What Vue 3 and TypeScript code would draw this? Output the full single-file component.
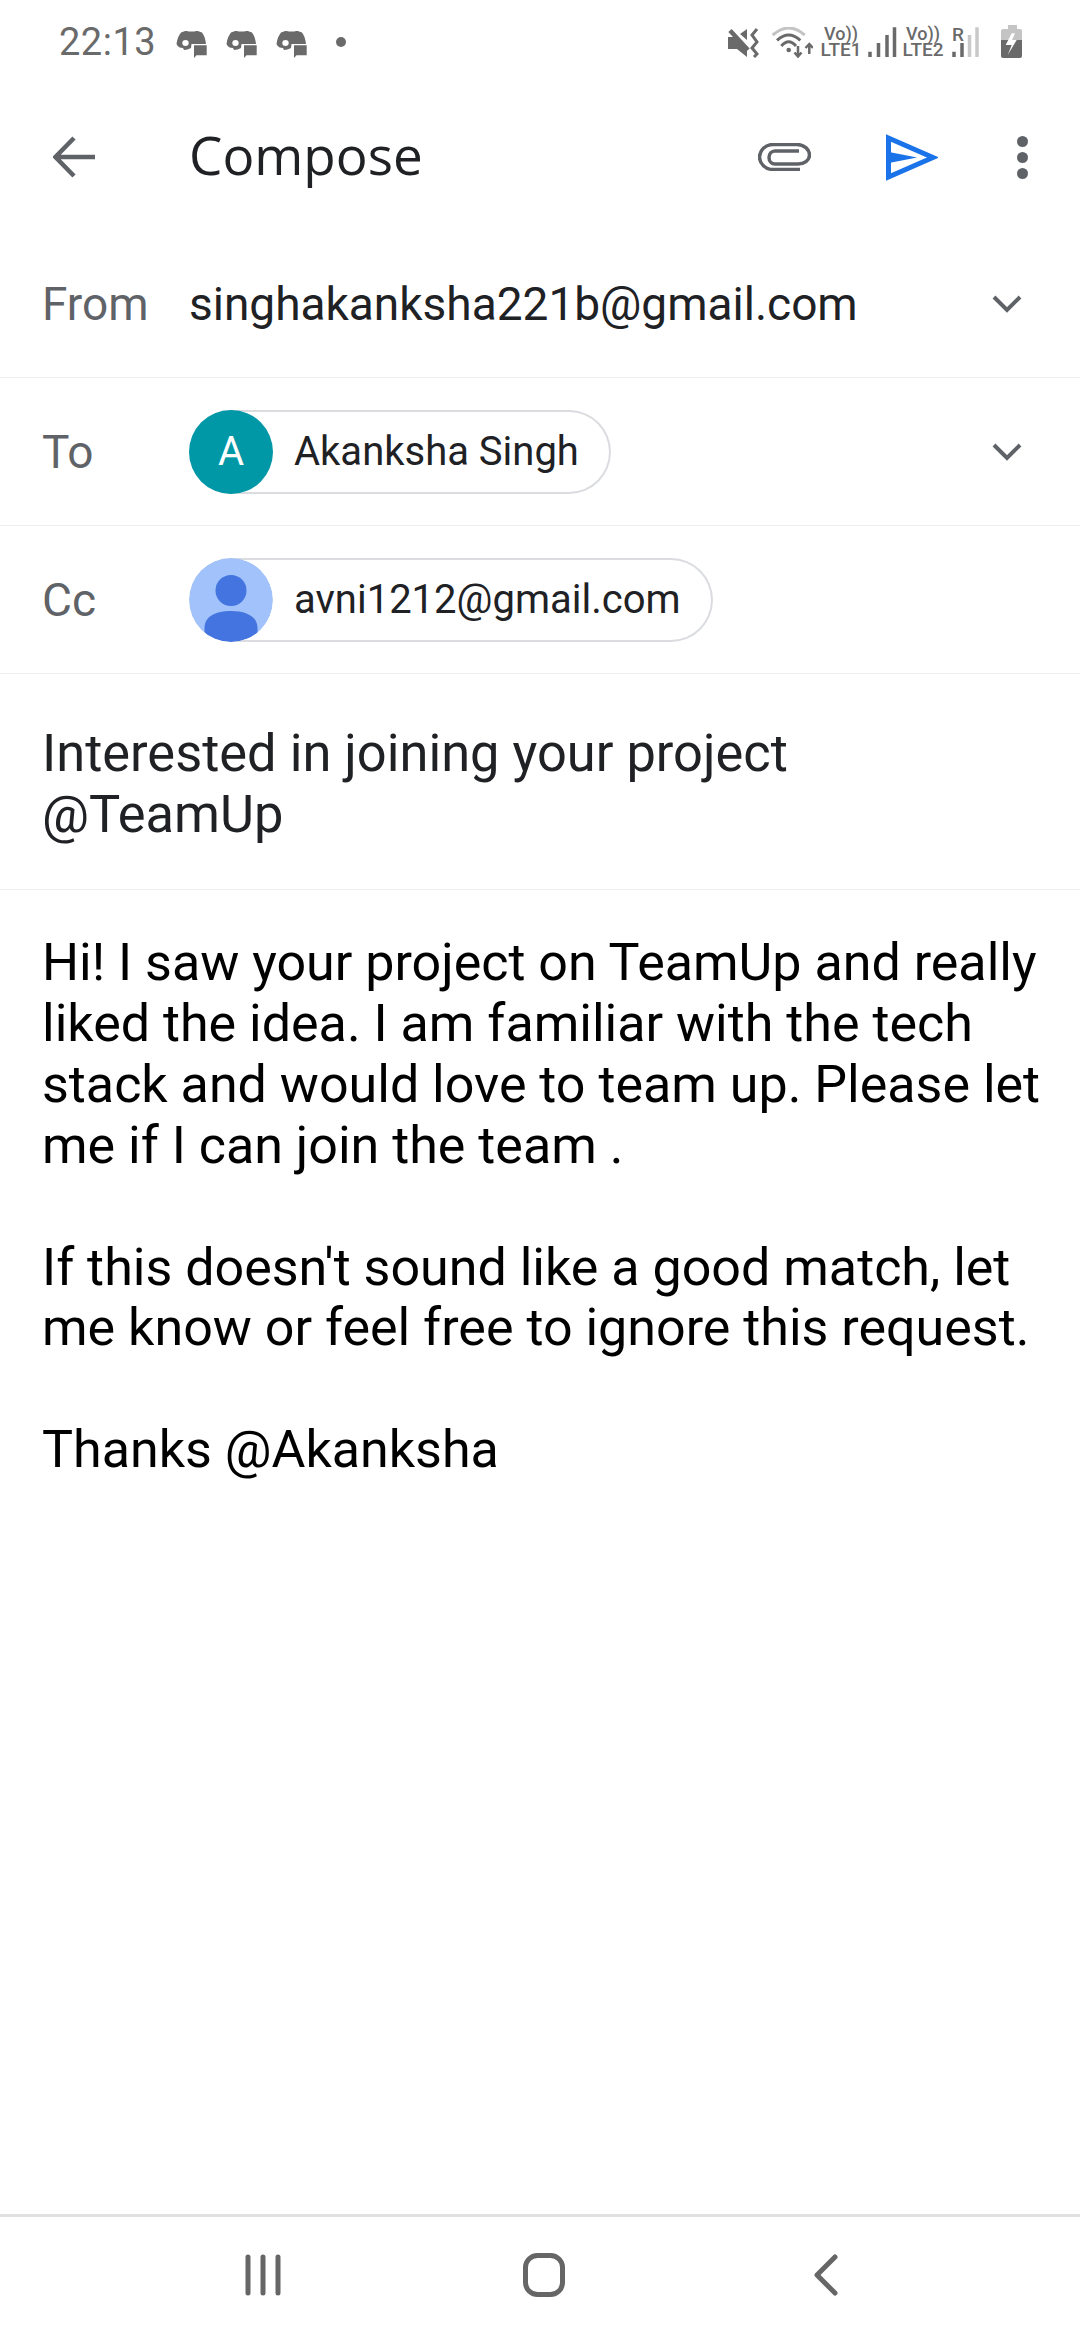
<template>
  <div class="screen">
    <div class="status-bar">
      <span class="clock">22:13</span>
      <svg v-for="n in 3" :key="n" class="discord" viewBox="0 0 31 28">
        <path d="M.5 14C1 9 3 5 5 2.500 8 1 11 .5 13 1.500h5C20 .5 23 1 26 2.500 28 5 29.500 9 30 14H15.500L15 18c-2 1-5 2-7 2l-1-2c-3 0-5-1-6.500-4z" fill="#6a6a6a" />
        <ellipse cx="9.500" cy="13" rx="3.200" ry="3" fill="#fff" />
        <path d="M18 15.300h12.700v10H20.500L18 28z" fill="#6a6a6a" stroke="#fff" stroke-width="1" paint-order="stroke" />
      </svg>
      <span class="dot" />
      <span class="spacer" />
      <svg class="mute" viewBox="0 0 31 31">
        <path d="M0 10h6l13 13v7L9 22H0zM12 7l7-5v11z" fill="#6a6a6a" />
        <path d="M2 3.500L20 23" stroke="#6a6a6a" stroke-width="4.500" />
        <path d="M29 2l-5 6 5 7-5 6 5 6-3 3" fill="none" stroke="#6a6a6a" stroke-width="3" />
      </svg>
      <svg class="wifi" viewBox="0 0 41 31">
        <path d="M.7 8Q16.700-6 32.700 8" fill="none" stroke="#c4c4c4" stroke-width="3" />
        <path d="M5 13.300Q16.700 2.700 28.300 13.300M9.300 19q7.400-8.600 14.700 0" fill="none" stroke="#6a6a6a" stroke-width="3" />
        <circle cx="16.700" cy="23" r="2.300" fill="#6a6a6a" />
        <path d="M26 19v10M22.500 25.500l3.500 4 3.500-4M37.300 27V18M33.500 21l3.800-4 3.700 4" fill="none" stroke="#6a6a6a" stroke-width="2.500" />
      </svg>
      <div class="net net-1"><span class="vo">Vo))</span><span class="lte">LTE1</span></div>
      <svg class="bars" viewBox="0 0 29 30">
        <path d="M2 30v-5.300M10.500 30V16M19 30V8M26.500 30V.3" stroke="#6a6a6a" stroke-width="3.500" />
      </svg>
      <div class="net net-2"><span class="vo">Vo))</span><span class="lte">LTE2</span></div>
      <div class="roam">
        <span class="roam-r">R</span>
        <svg class="bars-r" viewBox="0 0 27 30">
          <path d="M2 30v-5.300M10 30V16" stroke="#6a6a6a" stroke-width="3.500" />
          <path d="M17.500 30V8M25 30V.3" stroke="#c9c9c9" stroke-width="3.500" />
        </svg>
      </div>
      <svg class="battery" viewBox="0 0 21 33">
        <path d="M7 0h9v4h3a2 2 0 0 1 2 2v9H0V6a2 2 0 0 1 2-2h5z" fill="#c4c4c4" />
        <path d="M0 15h21v16a2 2 0 0 1-2 2H2a2 2 0 0 1-2-2z" fill="#6a6a6a" />
        <path d="M10.700 8.300L4.700 20h6l-4 10 9-15H11l3-6.700z" fill="#fff" />
      </svg>
    </div>

    <div class="toolbar">
      <svg class="back" viewBox="0 0 42 42">
        <path d="M42 21H4M21 2L2.500 21 21 40" fill="none" stroke="#5f6368" stroke-width="4.500" />
      </svg>
      <span class="title">Compose</span>
      <svg class="clip" viewBox="0 0 53 28">
        <path d="M42 26.500H15C7.500 26.500 1.500 20.500 1.500 14S7.500 1.500 15 1.500h24c7 0 12.500 5 12.500 10.500S46 21 40 21H17c-3.500 0-6-3-6-6.500S13.500 8 17 8h24" fill="none" stroke="#5f6368" stroke-width="3.500" />
      </svg>
      <svg class="send" viewBox="0 0 52 47">
        <path d="M2.500 4v39L47 23.500z" fill="none" stroke="#1a73e8" stroke-width="5" />
        <path d="M3 18l28 5.500L3 29z" fill="#1a73e8" />
      </svg>
      <div class="more"><i /><i /><i /></div>
    </div>

    <div class="row">
      <span class="label">From</span>
      <span class="from-value">singhakanksha221b@gmail.com</span>
      <svg class="chevron" viewBox="0 0 30 18"><path d="M2 2l13 13L28 2" fill="none" stroke="#5f6368" stroke-width="4" /></svg>
    </div>
    <div class="row">
      <span class="label">To</span>
      <div class="chip">
        <span class="avatar avatar-letter">A</span>
        <span class="chip-text">Akanksha Singh</span>
      </div>
      <svg class="chevron" viewBox="0 0 30 18"><path d="M2 2l13 13L28 2" fill="none" stroke="#5f6368" stroke-width="4" /></svg>
    </div>
    <div class="row">
      <span class="label">Cc</span>
      <div class="chip">
        <svg class="avatar" viewBox="0 0 84 84">
          <defs><clipPath id="av"><circle cx="42" cy="42" r="42" /></clipPath></defs>
          <circle cx="42" cy="42" r="42" fill="#a1c2fa" />
          <g clip-path="url(#av)">
            <circle cx="42" cy="32.500" r="15.500" fill="#4374e0" />
            <path d="M15.500 84V70c0-12 12-17 26.500-17s26.500 5 26.500 17v14z" fill="#4374e0" />
          </g>
        </svg>
        <span class="chip-text">avni1212@gmail.com</span>
      </div>
    </div>

    <div class="subject">Interested in joining your project<br />@TeamUp</div>

    <div class="body">
      <div v-for="(line, i) in bodyLines" :key="i" class="body-line">{{ line }}</div>
    </div>

    <div class="nav-bar">
      <svg class="nav-recent" viewBox="0 0 36 42">
        <path d="M3 3v36M18 3v36M33 3v36" stroke="#666" stroke-width="5" stroke-linecap="round" />
      </svg>
      <svg class="nav-home" viewBox="0 0 42 44">
        <rect x="2.500" y="2.500" width="37" height="39" rx="12" fill="none" stroke="#666" stroke-width="5" />
      </svg>
      <svg class="nav-back" viewBox="0 0 24 42">
        <path d="M21 3L3 21l18 18" fill="none" stroke="#666" stroke-width="5" stroke-linecap="round" stroke-linejoin="round" />
      </svg>
    </div>
  </div>
</template>

<script setup lang="ts">
const bodyLines: string[] = [
  "Hi! I saw your project on TeamUp and really",
  "liked the idea. I am familiar with the tech",
  "stack and would love to team up. Please let",
  "me if I can join the team .",
  "\u00a0",
  "If this doesn't sound like a good match, let",
  "me know or feel free to ignore this request.",
  "\u00a0",
  "Thanks @Akanksha",
];
</script>

<style>
html,
body {
  margin: 0;
  background: #fff;
}
</style>

<style scoped>
.screen {
  width: 1080px;
  height: 2340px;
  display: flex;
  flex-direction: column;
  background: #fff;
  font-family: Roboto, sans-serif;
  overflow: hidden;
}

.status-bar {
  height: 84px;
  display: flex;
  align-items: center;
  padding: 0 58px 0 59px;
  color: #6a6a6a;
  box-sizing: border-box;
}

.clock {
  font-size: 38px;
  width: 117px;
  letter-spacing: 0.5px;
}

.discord {
  width: 31px;
  height: 28px;
  margin: 3px 19px 0 0;
}

.dot {
  width: 10px;
  height: 10px;
  border-radius: 50%;
  background: #6a6a6a;
  margin-left: 10px;
}

.spacer {
  flex: 1;
}

.mute {
  width: 31px;
  height: 31px;
  margin-right: 13px;
}

.wifi {
  width: 41px;
  height: 31px;
  margin-right: 9px;
}

.net {
  display: flex;
  flex-direction: column;
  align-items: center;
  font-weight: 500;
  width: 38px;
}

.net-2 {
  width: 40px;
}

.vo {
  font-size: 18px;
  line-height: 15px;
  white-space: nowrap;
}

.lte {
  font-size: 19px;
  line-height: 17px;
}

.bars {
  width: 29px;
  height: 30px;
  margin: 0 6px 0 8px;
}

.roam {
  position: relative;
  width: 27px;
  height: 30px;
  margin-left: 9px;
}

.roam-r {
  position: absolute;
  left: 0;
  top: -4px;
  font-size: 19px;
  font-weight: 500;
}

.bars-r {
  display: block;
  width: 27px;
  height: 30px;
}

.battery {
  width: 21px;
  height: 33px;
  margin: -2px 0 0 22px;
}

.toolbar {
  height: 146px;
  display: flex;
  align-items: center;
  padding: 0 51px 0 53px;
  box-sizing: border-box;
}

.back {
  width: 42px;
  height: 42px;
  margin-right: 94px;
}

.title {
  flex: 1;
  font-family: "Open Sans", sans-serif;
  font-size: 53px;
  color: #202124;
  margin-bottom: 5px;
}

.clip {
  width: 53px;
  height: 28px;
  margin-right: 75px;
}

.send {
  width: 52px;
  height: 47px;
  margin-right: 79px;
}

.more {
  width: 12px;
  display: flex;
  flex-direction: column;
  gap: 5px;
}

.more i {
  display: block;
  width: 11px;
  height: 11px;
  border-radius: 50%;
  background: #5f6368;
}

.row {
  height: 148px;
  display: flex;
  align-items: center;
  padding: 0 58px 0 42px;
  border-bottom: 1px solid #eceef0;
  box-sizing: border-box;
}

.label {
  width: 147px;
  font-size: 46px;
  color: #5f6368;
}

.from-value {
  flex: 1;
  font-size: 46px;
  color: #202124;
}

.chip {
  height: 84px;
  display: flex;
  align-items: center;
  margin-right: auto;
  border: 2px solid #dadce0;
  border-left: 0;
  border-radius: 42px;
  box-sizing: border-box;
  padding-right: 30px;
}

.avatar {
  width: 84px;
  height: 84px;
  border-radius: 50%;
  flex: none;
}

.avatar-letter {
  display: flex;
  align-items: center;
  justify-content: center;
  background: #0097a7;
  color: #fff;
  font-size: 40px;
}

.chip-text {
  margin-left: 21px;
  font-size: 40px;
  color: #202124;
}

.chevron {
  width: 30px;
  height: 18px;
}

.subject {
  padding: 49px 42px 44px;
  font-size: 52.4px;
  line-height: 61px;
  color: #202124;
  border-bottom: 1px solid #eceef0;
}

.body {
  flex: 1;
  padding: 43px 0 0 42px;
  font-size: 52px;
  line-height: 60.9px;
  color: #000;
}

.body-line {
  white-space: pre;
}

.nav-bar {
  height: 126px;
  border-top: 3px solid #e0e0e0;
  box-sizing: border-box;
  display: flex;
  align-items: center;
  padding: 0 0 7px 245px;
}

.nav-recent {
  width: 36px;
  height: 42px;
}

.nav-home {
  width: 42px;
  height: 44px;
  margin-left: 242px;
}

.nav-back {
  width: 24px;
  height: 42px;
  margin-left: 249px;
}
</style>
